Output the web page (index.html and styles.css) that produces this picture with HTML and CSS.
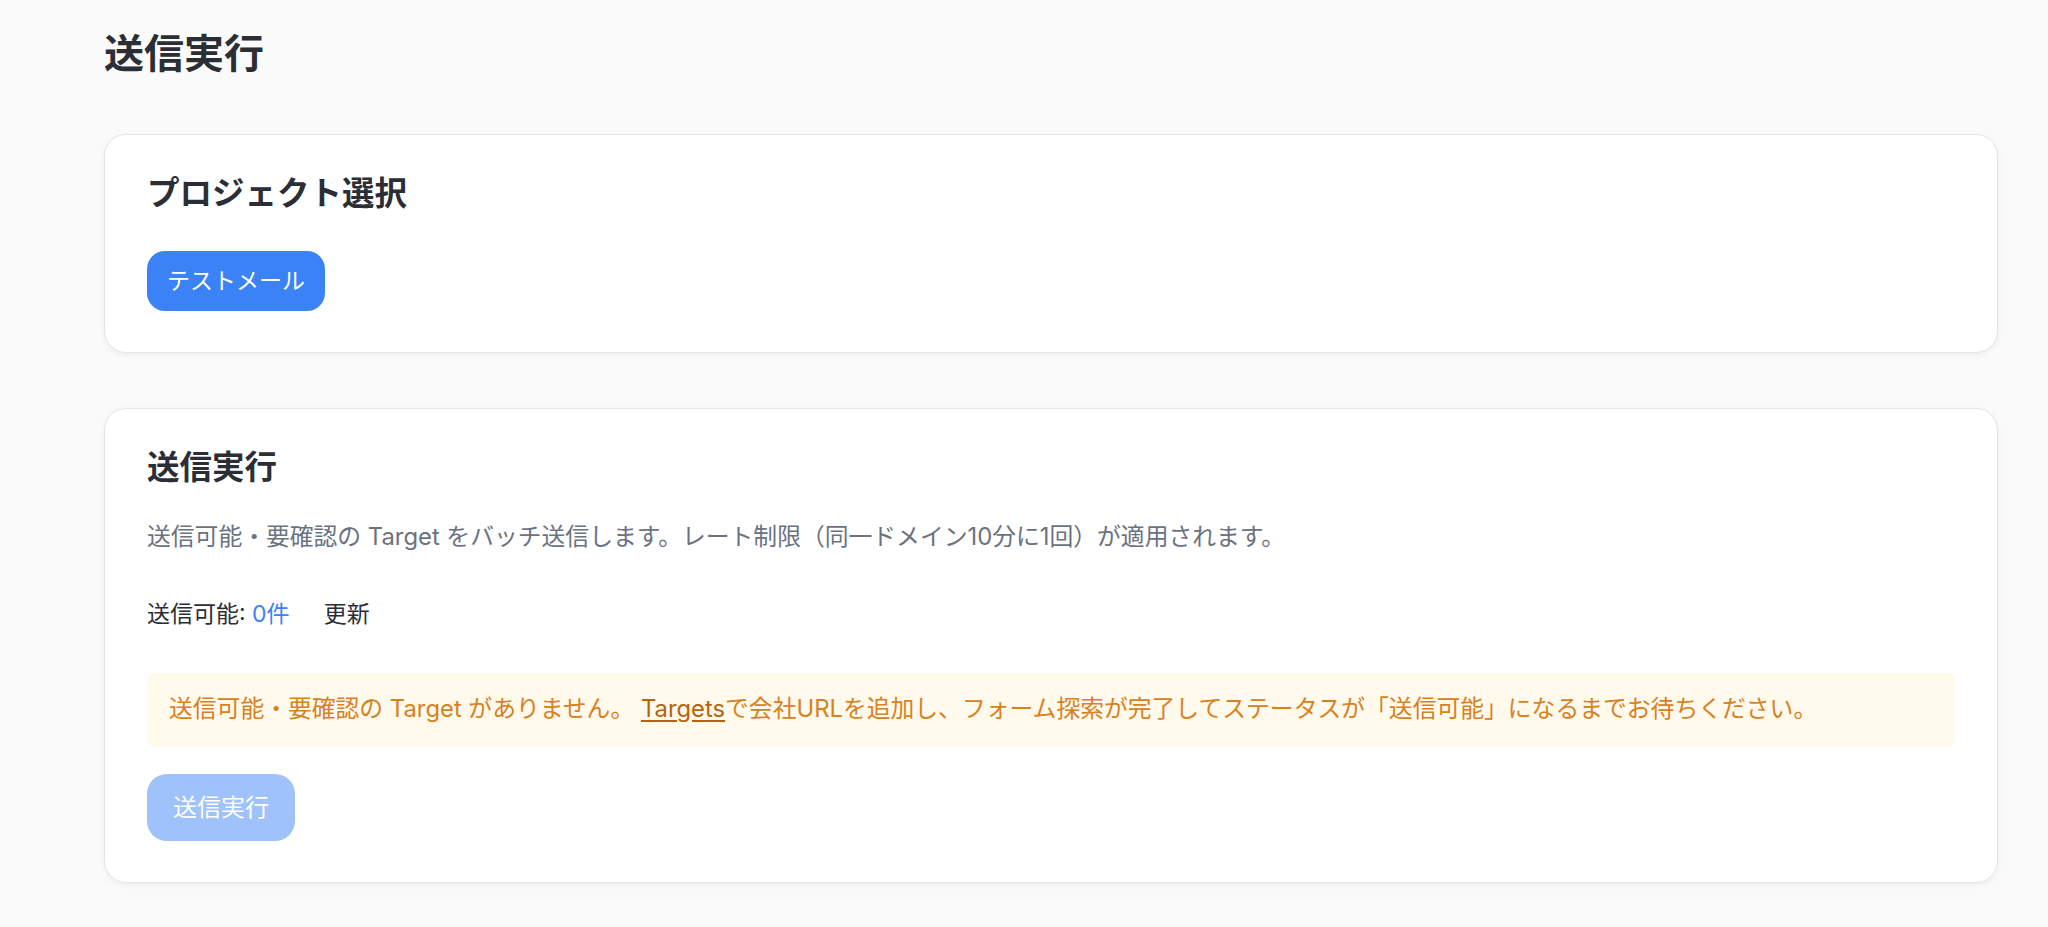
FILE: index.html
```html
<!DOCTYPE html>
<html lang="ja">
<head>
    <meta charset="UTF-8">
    <title>送信実行</title>
    <link rel="stylesheet" href="styles.css">
</head>
<body>
    <main class="page">
        <h1 class="page-title">送信実行</h1>

        <section class="card">
            <h2 class="card-title">プロジェクト選択</h2>
            <div class="project-list">
                <button class="btn btn-primary">テストメール</button>
            </div>
        </section>

        <section class="card">
            <h2 class="card-title">送信実行</h2>
            <p class="card-desc">送信可能・要確認の Target をバッチ送信します。レート制限（同一ドメイン10分に1回）が適用されます。</p>
            <div class="count-row">
                <span>送信可能: <span class="count">0件</span></span>
                <button class="btn-link">更新</button>
            </div>
            <div class="notice">
                送信可能・要確認の Target がありません。 <a href="#" class="notice-link">Targets</a>で会社URLを追加し、フォーム探索が完了してステータスが「送信可能」になるまでお待ちください。
            </div>
            <div>
                <button class="btn btn-primary btn-lg" disabled>送信実行</button>
            </div>
        </section>
    </main>
</body>
</html>
```

FILE: styles.css
```css
body { margin: 0; background: #fafafa; color: #2b2e35; font-family: Inter, "Noto Sans CJK JP", sans-serif; }
.page { padding: 30px 50px 20px 104px; }
.page-title { font-size: 40px; line-height: 48px; font-weight: 700; margin: 0 0 56px; }

.card { background: #fff; border: 1.5px solid #e4e5e8; border-radius: 22px; padding: 41px 42px; margin-bottom: 55px; box-shadow: 0 2px 6px #0000000d; }
.card:last-child { margin-bottom: 0; }
.card-title { font-size: 32.5px; line-height: 36px; font-weight: 700; margin: 0 0 39px; }
.card-title + .card-desc { margin-top: -4px; }
.card-desc { font-size: 23.8px; line-height: 32px; color: #6b7280; margin: 0 0 45px; }

.btn { border: none; border-radius: 18px; font-family: inherit; cursor: pointer; }
.btn-primary { background: #3b82f6; color: #fff; font-size: 23px; line-height: 30px; padding: 15px 20px; }
.btn-lg { font-size: 24px; line-height: 31px; padding: 18px 26px; border-radius: 20px; }
.btn:disabled { background: #9fc2fb; cursor: default; }

.count-row { display: flex; align-items: center; gap: 34px; font-size: 23px; line-height: 32px; margin-bottom: 43px; }
.count { color: #3b82f6; }
.btn-link { background: none; border: none; padding: 0; font: inherit; color: #2b2e35; cursor: pointer; }

.notice { background: #fffaeb; color: #d9801f; font-size: 23.8px; line-height: 32px; padding: 20px 22px 21px; border-radius: 6px; margin-bottom: 28px; }
.notice-link { color: #b8620f; text-decoration: underline; text-underline-offset: 3px; }
```
